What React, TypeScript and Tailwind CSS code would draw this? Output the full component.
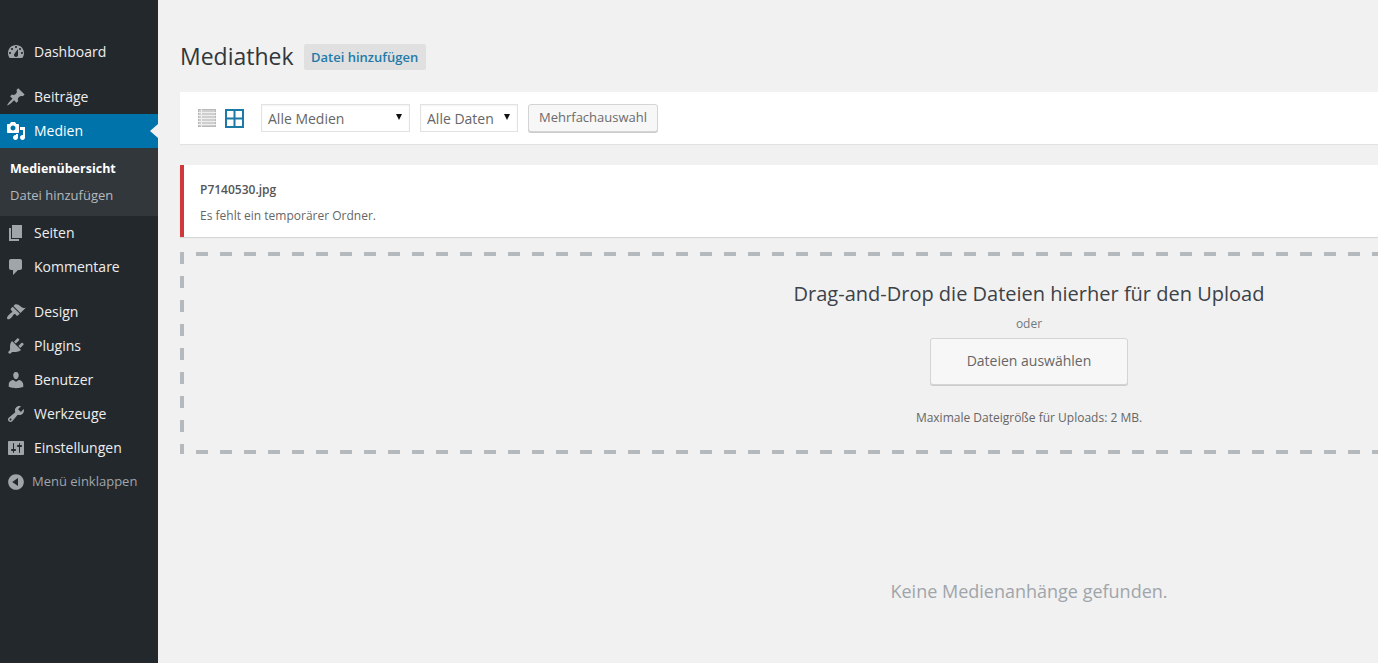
import { useState } from "react"

const font = "font-['Open_Sans',sans-serif]"

const icons = {
  dashboard:
    "M3.76 16h12.48c1.1-1.37 1.76-3.11 1.76-5 0-4.42-3.58-8-8-8s-8 3.58-8 8c0 1.89.66 3.63 1.76 5zM10 4c.55 0 1 .45 1 1s-.45 1-1 1-1-.45-1-1 .45-1 1-1zM6 6c.55 0 1 .45 1 1s-.45 1-1 1-1-.45-1-1 .45-1 1-1zm8 0c.55 0 1 .45 1 1s-.45 1-1 1-1-.45-1-1 .45-1 1-1zm-5.37 5.55L12 7v6c0 1.1-.9 2-2 2s-2-.9-2-2c0-.57.24-1.08.63-1.45zM4 10c.55 0 1 .45 1 1s-.45 1-1 1-1-.45-1-1 .45-1 1-1zm12 0c.55 0 1 .45 1 1s-.45 1-1 1-1-.45-1-1 .45-1 1-1z",
  pin: "M10.44 3.02l1.82-1.82 6.36 6.35-1.83 1.82c-1.05-.68-2.48-.57-3.41.36l-.75.75c-.92.93-1.04 2.35-.35 3.41l-1.83 1.82-2.41-2.41-2.8 2.79c-.42.42-3.38 2.71-3.8 2.29s1.86-3.39 2.28-3.81l2.79-2.79L4.1 9.36l1.83-1.82c1.05.69 2.48.57 3.4-.36l.75-.75c.93-.92 1.05-2.35.36-3.41z",
  media:
    "M13 11V4c0-.55-.45-1-1-1h-1.67L9 1H5L3.67 3H2c-.55 0-1 .45-1 1v7c0 .55.45 1 1 1h10c.55 0 1-.45 1-1zM7 4.5c1.38 0 2.5 1.12 2.5 2.5S8.38 9.5 7 9.5 4.5 8.38 4.5 7 5.62 4.5 7 4.5zM14 6h5v10.5c0 1.38-1.12 2.5-2.5 2.5S14 17.88 14 16.5s1.12-2.5 2.5-2.5c.17 0 .34.02.5.05V9h-3V6zm-4 8.05V13h2v3.5c0 1.38-1.12 2.5-2.5 2.5S7 17.88 7 16.5 8.12 14 9.5 14c.17 0 .34.02.5.05z",
  page: "M6 15V2h10v13H6zm-1 1h8v2H3V5h2v11z",
  comments: "M5 2h9c1.1 0 2 .9 2 2v7c0 1.1-.9 2-2 2h-2l-5 5v-5H5c-1.1 0-2-.9-2-2V4c0-1.1.9-2 2-2z",
  design:
    "M14.48 11.06L7.41 3.99l1.5-1.5c.5-.56 2.3-.47 3.51.32 1.21.8 1.43 1.28 2.91 2.1 1.18.64 2.45 1.26 4.45.85zm-.71.71L6.7 4.7 4.93 6.47c-.39.39-.39 1.02 0 1.41l1.06 1.06c.39.39.39 1.03 0 1.42-.6.6-1.43 1.11-2.21 1.69-.35.26-.7.53-1.01.84-1.34 1.34-2.37 3.06-1.37 4.06 1 1 2.72-.03 4.05-1.37.31-.31.58-.65.84-1 .58-.78 1.09-1.61 1.69-2.21.39-.39 1.03-.39 1.42 0l1.06 1.06c.39.39 1.02.39 1.41 0z",
  plugins:
    "M13.11 4.36L9.87 7.6 8 5.73l3.24-3.24c.35-.34 1.05-.2 1.56.32.52.51.66 1.21.31 1.55zm-8 1.77l.91-1.12 9.01 9.01-1.19.84c-.71.71-2.63 1.16-3.82 1.16H6.14L4.9 17.26c-.59.59-1.54.59-2.12 0-.59-.58-.59-1.53 0-2.12l1.24-1.24v-3.88c0-1.13.4-3.19 1.09-3.89zm7.26 3.97l3.24-3.24c.34-.35 1.04-.21 1.55.31.52.51.66 1.21.31 1.55l-3.24 3.25z",
  users:
    "M10 9.25c-2.27 0-2.73-3.44-2.73-3.44C7 4.02 7.82 2 9.97 2c2.16 0 2.98 2.02 2.71 3.81 0 0-.41 3.44-2.68 3.44zm0 2.57L12.72 10c2.39 0 4.52 2.33 4.52 4.53v2.49s-3.65 1.13-7.24 1.13c-3.65 0-7.24-1.13-7.24-1.13v-2.49c0-2.25 1.94-4.48 4.47-4.48z",
  tools:
    "M16.68 9.77c-1.34 1.34-3.3 1.67-4.95.99l-5.41 6.52c-.99.99-2.59.99-3.58 0s-.99-2.59 0-3.57l6.52-5.42c-.68-1.65-.35-3.61.99-4.95 1.28-1.28 3.12-1.62 4.72-1.06l-2.89 2.89 2.82 2.82 2.86-2.87c.53 1.58.18 3.39-1.08 4.65zM3.81 16.21c.4.39 1.04.39 1.43 0 .4-.4.4-1.04 0-1.43-.39-.4-1.03-.4-1.43 0-.39.39-.39 1.03 0 1.43z",
  settings:
    "M18 16V4c0-.55-.45-1-1-1H3c-.55 0-1 .45-1 1v12c0 .55.45 1 1 1h14c.55 0 1-.45 1-1zM8 11h1c.55 0 1 .45 1 1s-.45 1-1 1H8v1.5c0 .28-.22.5-.5.5s-.5-.22-.5-.5V13H6c-.55 0-1-.45-1-1s.45-1 1-1h1V5.5c0-.28.22-.5.5-.5s.5.22.5.5V11zm5-2h-1c-.55 0-1-.45-1-1s.45-1 1-1h1V5.5c0-.28.22-.5.5-.5s.5.22.5.5V7h1c.55 0 1 .45 1 1s-.45 1-1 1h-1v5.5c0 .28-.22.5-.5.5s-.5-.22-.5-.5V9z",
  collapse: "M10 2.16c4.33 0 7.84 3.51 7.84 7.84s-3.51 7.84-7.84 7.84S2.16 14.33 2.16 10 5.71 2.16 10 2.16zm2 11.72V6.12L6.18 9.97z",
}

function Dashicon({ d, className }: { d: string; className: string }) {
  return (
    <svg viewBox="0 0 20 20" className={className} fill="currentColor">
      <path d={d} />
    </svg>
  )
}

function NavItem({ icon, label, active }: { icon: string; label: string; active?: boolean }) {
  return (
    <a
      href="#"
      className={
        "relative flex h-[34px] items-center text-sm " +
        (active ? "bg-[#0073aa] text-white" : "text-[#eeeeee]")
      }
    >
      <Dashicon d={icon} className={"ml-[6px] size-5 shrink-0 " + (active ? "text-white" : "text-[#a0a5aa]")} />
      <span className="ml-2">{label}</span>
      {/* Arrow pointing at the content area */}
      {active && (
        <span className="absolute right-0 top-[10px] border-y-[7px] border-r-[8px] border-y-transparent border-r-[#f1f1f1]" />
      )}
    </a>
  )
}

function Sidebar() {
  return (
    <aside className="w-[158px] shrink-0 bg-[#23282d] pt-[35px]">
      <NavItem icon={icons.dashboard} label="Dashboard" />
      <div className="h-[11px]" />
      <NavItem icon={icons.pin} label="Beiträge" />
      <NavItem icon={icons.media} label="Medien" active />
      <div className="flex h-[68px] flex-col bg-[#32373c] pl-[10px] pt-[7px] text-[13px]">
        <a href="#" className="flex h-[27px] items-center pt-[2px] text-[12.5px] font-bold text-white">
          Medienübersicht
        </a>
        <a href="#" className="flex h-[27px] items-center text-[#b4b9be]">
          Datei hinzufügen
        </a>
      </div>
      <NavItem icon={icons.page} label="Seiten" />
      <NavItem icon={icons.comments} label="Kommentare" />
      <div className="h-[11px]" />
      <NavItem icon={icons.design} label="Design" />
      <NavItem icon={icons.plugins} label="Plugins" />
      <NavItem icon={icons.users} label="Benutzer" />
      <NavItem icon={icons.tools} label="Werkzeuge" />
      <NavItem icon={icons.settings} label="Einstellungen" />
      <button className="flex h-[34px] w-full items-center text-[13px] text-[#a0a5aa]">
        <Dashicon d={icons.collapse} className="ml-[6px] size-5 shrink-0" />
        <span className="ml-[6px]">Menü einklappen</span>
      </button>
    </aside>
  )
}

function FilterSelect({ value, options, className }: { value: string; options: string[]; className: string }) {
  const [selected, setSelected] = useState(value)
  return (
    <div className={"relative h-7 " + className}>
      <select
        value={selected}
        onChange={(e) => setSelected(e.target.value)}
        className="h-full w-full appearance-none border border-[#e2e2e2] bg-white pl-[6px] pt-[2px] text-sm text-[#666666] shadow-[inset_0_1px_2px_rgba(0,0,0,0.05)]"
      >
        {options.map((o) => (
          <option key={o}>{o}</option>
        ))}
      </select>
      <span className="pointer-events-none absolute right-[8px] top-[10px] border-x-[3.5px] border-t-[6px] border-x-transparent border-t-[#111111]" />
    </div>
  )
}

function Toolbar() {
  return (
    <div className="flex h-[52px] items-center bg-white pl-[18px] shadow-[0_1px_1px_rgba(0,0,0,0.06)]">
      <svg viewBox="0 0 18 18" className="size-[18px] shrink-0" fill="none" stroke="#b9b9b9">
        <rect x="0.5" y="0.5" width="17" height="17" fill="#cfcfcf" />
        <path d="M0 3.5h18M0 6.5h18M0 9.5h18M0 12.5h18M0 15.5h18M3.5 0v18" stroke="#eeeeee" />
      </svg>
      <svg viewBox="0 0 19 19" className="ml-[9px] size-[19px] shrink-0" fill="none" stroke="#1c7aa6" strokeWidth="2">
        <rect x="1" y="1" width="17" height="17" />
        <path d="M9.5 1v17M1 9.5h17" />
      </svg>
      <FilterSelect value="Alle Medien" options={["Alle Medien", "Bilder", "Audio", "Video"]} className="ml-[17px] w-[149px]" />
      <FilterSelect value="Alle Daten" options={["Alle Daten"]} className="ml-[10px] w-[98px]" />
      <button className="ml-[10px] h-7 w-[130px] rounded-[3px] border border-[#d4d4d4] bg-[#f7f7f7] text-[13px] text-[#6b6b6b] shadow-[0_1px_0_#cccccc]">
        Mehrfachauswahl
      </button>
    </div>
  )
}

function UploadArea() {
  return (
    <div className="relative h-[202px]">
      {/* 12px dashes, wider than a browser's dashed border would draw them */}
      <div className="absolute left-1 right-0 top-0 h-1 bg-[repeating-linear-gradient(90deg,transparent_0_12px,#b4b9be_12px_24px)]" />
      <div className="absolute left-1 right-0 bottom-0 h-1 bg-[repeating-linear-gradient(90deg,transparent_0_12px,#b4b9be_12px_24px)]" />
      <div className="absolute bottom-0 left-0 top-0 w-1 bg-[repeating-linear-gradient(180deg,#b4b9be_0_12px,transparent_12px_24px)]" />
      <div className="flex flex-col items-center pt-[28px]">
        <h2 className="text-xl leading-7 text-[#3c4248]">Drag-and-Drop die Dateien hierher für den Upload</h2>
        <p className="mt-2 text-xs leading-4 text-[#72777c]">oder</p>
        <button className="mt-[6px] h-[47px] w-[198px] rounded-[3px] border border-[#d4d4d4] bg-[#f7f7f7] pb-[2px] text-sm text-[#666666] shadow-[0_1px_0_#cccccc]">
          Dateien auswählen
        </button>
        <p className="mt-[25px] text-xs leading-4 text-[#666666]">Maximale Dateigröße für Uploads: 2 MB.</p>
      </div>
    </div>
  )
}

export default function App() {
  return (
    <div className={"flex h-screen overflow-hidden bg-[#f1f1f1] " + font}>
      <Sidebar />
      <main className="min-w-0 flex-1 overflow-hidden pl-[22px] pt-[44px]">
        {/* The media frame is wider than the window and runs off the right edge */}
        <div className="w-[1698px]">
          <div className="flex h-[26px] items-center">
            <h1 className="pb-[2px] text-[23px] text-[#32373c]">Mediathek</h1>
            <a href="#" className="ml-[10px] flex h-[26px] w-[122px] items-center justify-center rounded-[2px] bg-[#e0e0e0] pt-[2px] text-[13px] font-semibold text-[#1f7aa8]">
              Datei hinzufügen
            </a>
          </div>
          <div className="mt-[22px]">
            <Toolbar />
          </div>
          <div className="mt-[21px] flex h-[72px] flex-col border-l-4 border-[#d0393b] bg-white pl-4 pt-4 shadow-[0_1px_1px_rgba(0,0,0,0.1)]">
            <p className="text-xs font-semibold leading-[18px] text-[#555555]">P7140530.jpg</p>
            <p className="mt-2 text-xs leading-[18px] text-[#666666]">Es fehlt ein temporärer Ordner.</p>
          </div>
          <div className="mt-[15px]">
            <UploadArea />
          </div>
          <p className="mt-[125px] text-center text-lg leading-6 text-[#a0a5aa]">Keine Medienanhänge gefunden.</p>
        </div>
      </main>
    </div>
  )
}
